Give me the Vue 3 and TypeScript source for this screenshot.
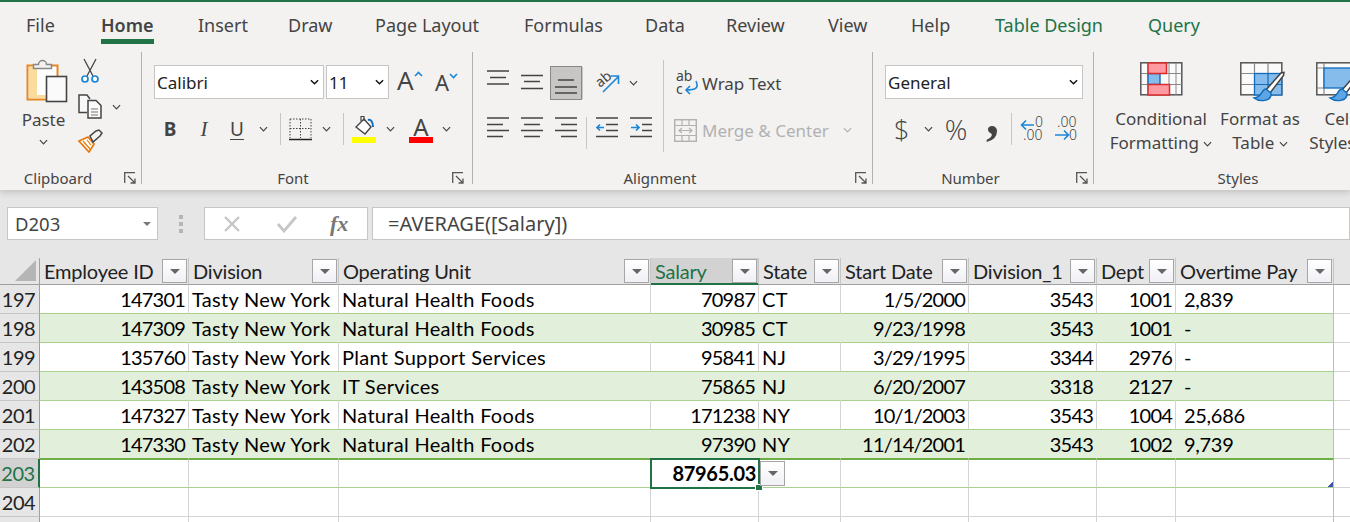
<script setup lang="ts">
interface Sheet {
  num: number
  id: string
  unit: string
  salary: string
  state: string
  start: string
  div1: string
  dept: string
  ot: string
}

const tabs: string[] = ['File', 'Home', 'Insert', 'Draw', 'Page Layout', 'Formulas', 'Data', 'Review', 'View', 'Help', 'Table Design', 'Query']

const headers: string[] = ['Employee ID', 'Division', 'Operating Unit', 'Salary', 'State', 'Start Date', 'Division_1', 'Dept', 'Overtime Pay']

const rows: Sheet[] = [
  { num: 197, id: '147301', unit: 'Natural Health Foods', salary: '70987', state: 'CT', start: '1/5/2000', div1: '3543', dept: '1001', ot: '2,839' },
  { num: 198, id: '147309', unit: 'Natural Health Foods', salary: '30985', state: 'CT', start: '9/23/1998', div1: '3543', dept: '1001', ot: '-' },
  { num: 199, id: '135760', unit: 'Plant Support Services', salary: '95841', state: 'NJ', start: '3/29/1995', div1: '3344', dept: '2976', ot: '-' },
  { num: 200, id: '143508', unit: 'IT Services', salary: '75865', state: 'NJ', start: '6/20/2007', div1: '3318', dept: '2127', ot: '-' },
  { num: 201, id: '147327', unit: 'Natural Health Foods', salary: '171238', state: 'NY', start: '10/1/2003', div1: '3543', dept: '1004', ot: '25,686' },
  { num: 202, id: '147330', unit: 'Natural Health Foods', salary: '97390', state: 'NY', start: '11/14/2001', div1: '3543', dept: '1002', ot: '9,739' },
]
</script>

<template>
  <div class="app">
    <nav class="tabs">
      <span v-for="t in tabs" :key="t" class="tab" :class="{ active: t === 'Home', ctx: t === 'Table Design' || t === 'Query' }">{{ t }}</span>
    </nav>

    <section class="ribbon">
      <!-- clipboard -->
      <div class="group g-clip">
        <div class="clip-body">
          <div class="paste">
            <svg width="42" height="46" viewBox="0 0 42 46">
              <rect x="1.5" y="7.5" width="30" height="34" fill="#fff" stroke="#e8871e" stroke-width="2" />
              <rect x="3" y="9" width="8" height="31" fill="#fbdc9c" />
              <rect x="3" y="37" width="18" height="3" fill="#fbdc9c" />
              <path d="M7.5 10.5V6.5h5a4 4 0 0 1 8 0h5v4z" fill="#f3f2f1" stroke="#8a8886" stroke-width="1.5" />
              <rect x="20.5" y="18.5" width="20" height="25" fill="#fafafa" stroke="#444" stroke-width="1.6" />
            </svg>
            <span class="paste-label">Paste</span>
            <svg class="chev" viewBox="0 0 10 6"><path d="M1 1l4 4 4-4" /></svg>
          </div>
          <div class="clip-tools">
            <svg width="24" height="26" viewBox="0 0 24 26">
              <path d="M6 1l9 17M18 1L9 18" fill="none" stroke="#444" stroke-width="1.3" />
              <circle cx="7" cy="21" r="3" fill="#fff" stroke="#1b87d6" stroke-width="1.7" />
              <circle cx="17" cy="21" r="3" fill="#fff" stroke="#1b87d6" stroke-width="1.7" />
            </svg>
            <div class="copy-row">
              <svg width="24" height="25" viewBox="0 0 24 25">
                <path d="M9 18.5H1V1h8l3 4" fill="#f8f8f8" stroke="#444" stroke-width="1.5" />
                <path d="M10 6.500h8l5 5V24H10z" fill="#fafafa" stroke="#444" stroke-width="1.5" />
                <path d="M13 15h7M13 18h7M13 21h7" stroke="#777" stroke-width="1" />
              </svg>
              <svg class="chev" viewBox="0 0 10 6"><path d="M1 1l4 4 4-4" /></svg>
            </div>
            <svg width="25" height="24" viewBox="0 0 25 24">
              <path d="M1 12l9-4 6 7-5 8z" fill="#fff" stroke="#e8780c" stroke-width="1.7" />
              <path d="M5 12l7 8M9 11l4 5" stroke="#e8780c" stroke-width="1.2" />
              <path d="M12 7l3 6 7-6 2-3-3-3-3 1z" fill="#f3f2f1" stroke="#444" stroke-width="1.5" />
            </svg>
          </div>
        </div>
        <footer class="glabel">
          <span class="gname">Clipboard</span>
          <svg class="launch" viewBox="0 0 12 12"><path d="M.7 11V.7H11M4 4l7 7M11 6.500V11H6.500" /></svg>
        </footer>
      </div>

      <!-- font -->
      <div class="group g-font">
        <div class="gbody">
          <div class="font-r1">
            <div class="select w-font"><span>Calibri</span><svg class="chev dark" viewBox="0 0 10 6"><path d="M1 1l4 4 4-4" /></svg></div>
            <div class="select w-size"><span>11</span><svg class="chev dark" viewBox="0 0 10 6"><path d="M1 1l4 4 4-4" /></svg></div>
            <div class="growa big">A<svg width="9" height="6" viewBox="0 0 9 6"><path d="M1 5l3.500-3.500L8 5" fill="none" stroke="#1b87d6" stroke-width="1.6" /></svg></div>
            <div class="growa small">A<svg width="9" height="6" viewBox="0 0 9 6"><path d="M1 1l3.500 3.500L8 1" fill="none" stroke="#1b87d6" stroke-width="1.6" /></svg></div>
          </div>
          <div class="font-r2">
            <span class="fmt b">B</span>
            <span class="fmt i">I</span>
            <span class="fmt u">U</span>
            <svg class="chev" viewBox="0 0 10 6"><path d="M1 1l4 4 4-4" /></svg>
            <i class="sep" />
            <svg width="23" height="23" viewBox="0 0 23 23">
              <path d="M1 1h21M1 1v19M22 1v19M11.500 1v19M1 10.500h21" fill="none" stroke="#444" stroke-width="1" stroke-dasharray="1.500 1.500" />
              <path d="M0 21.500h23" stroke="#222" stroke-width="1.500" />
            </svg>
            <svg class="chev" viewBox="0 0 10 6"><path d="M1 1l4 4 4-4" /></svg>
            <i class="sep" />
            <svg width="24" height="28" viewBox="0 0 24 28">
              <path d="M4 12l8-8 7 8-6 7z" fill="#fff" stroke="#444" stroke-width="1.400" />
              <path d="M9 6V1.500h3V6" fill="none" stroke="#444" stroke-width="1.200" />
              <path d="M16 5c3-1 5 2 5 7" fill="none" stroke="#106ebe" stroke-width="2" />
              <rect y="22" width="24" height="6" fill="#ffff00" />
            </svg>
            <svg class="chev" viewBox="0 0 10 6"><path d="M1 1l4 4 4-4" /></svg>
            <div class="fcolor"><span>A</span><i /></div>
            <svg class="chev" viewBox="0 0 10 6"><path d="M1 1l4 4 4-4" /></svg>
          </div>
        </div>
        <footer class="glabel">
          <span class="gname">Font</span>
          <svg class="launch" viewBox="0 0 12 12"><path d="M.7 11V.7H11M4 4l7 7M11 6.500V11H6.500" /></svg>
        </footer>
      </div>

      <!-- alignment -->
      <div class="group g-align">
        <div class="align-body">
          <div class="align-left">
            <div class="al-r1">
              <svg class="lines" viewBox="0 0 22 34"><path d="M0 5h22M3 11.500h16M0 18h22" /></svg>
              <svg class="lines" viewBox="0 0 22 34"><path d="M0 9.500h22M3 15.500h16M0 22.500h22" /></svg>
              <span class="al-on"><svg class="lines" viewBox="0 0 22 34"><path d="M3 14h16M0 21h22M0 27h22" /></svg></span>
              <i class="sep" />
              <svg class="orient" width="26" height="24" viewBox="0 0 26 24">
                <text x="0" y="13" transform="rotate(-40 8 8)" class="svg-txt">ab</text>
                <path d="M8 21L23 6M15.500 5h8v8" fill="none" stroke="#1b87d6" stroke-width="1.600" />
              </svg>
              <svg class="chev" viewBox="0 0 10 6"><path d="M1 1l4 4 4-4" /></svg>
            </div>
            <div class="al-r2">
              <svg class="lines" viewBox="0 0 22 22"><path d="M0 1h22M0 7.500h16M0 13.500h22M0 19.500h16" /></svg>
              <svg class="lines" viewBox="0 0 22 22"><path d="M0 1h22M3 7.500h16M0 13.500h22M3 19.500h16" /></svg>
              <svg class="lines" viewBox="0 0 22 22"><path d="M0 1h22M6 7.500h16M0 13.500h22M6 19.500h16" /></svg>
              <i class="sep" />
              <svg class="lines" viewBox="0 0 22 22"><path d="M0 1h22M10 7.500h12M10 13.500h12M0 19.500h22" /><path class="blue" d="M8 10.500H1M4 7.500l-3 3 3 3" /></svg>
              <svg class="lines" viewBox="0 0 22 22"><path d="M0 1h22M12 7.500h10M12 13.500h10M0 19.500h22" /><path class="blue" d="M1 10.500h8M6 7.500l3 3-3 3" /></svg>
            </div>
          </div>
          <div class="align-right">
            <div class="wrap-btn">
              <svg class="open" width="23" height="26" viewBox="0 0 23 26">
                <text x="0" y="11" class="svg-txt">ab</text>
                <text x="0" y="24" class="svg-txt">c</text>
                <path d="M20 11c3 7 0 9-10 9M14 16l-4 4 4 4" fill="none" stroke="#1b87d6" stroke-width="1.600" />
              </svg>
              <span>Wrap Text</span>
            </div>
            <div class="merge-btn">
              <svg width="23" height="23" viewBox="0 0 23 23">
                <rect x=".7" y=".7" width="21.600" height="21.600" fill="none" stroke="#b1b1b1" stroke-width="1.400" />
                <path d="M1 6.500h21M1 16.500h21M8 1v5M15 1v5M8 17v5M15 17v5M5 11.500h13M8 9l-3 2.500L8 14M15 9l3 2.500L15 14" fill="none" stroke="#b1b1b1" stroke-width="1.200" />
              </svg>
              <span>Merge &amp; Center</span>
              <svg class="chev dim" viewBox="0 0 10 6"><path d="M1 1l4 4 4-4" /></svg>
            </div>
          </div>
        </div>
        <footer class="glabel">
          <span class="gname">Alignment</span>
          <svg class="launch" viewBox="0 0 12 12"><path d="M.7 11V.7H11M4 4l7 7M11 6.500V11H6.500" /></svg>
        </footer>
      </div>

      <!-- number -->
      <div class="group g-num">
        <div class="gbody">
          <div class="select w-num"><span>General</span><svg class="chev dark" viewBox="0 0 10 6"><path d="M1 1l4 4 4-4" /></svg></div>
          <div class="num-r2">
            <span class="dollar">$</span>
            <svg class="chev" viewBox="0 0 10 6"><path d="M1 1l4 4 4-4" /></svg>
            <span class="pct">%</span>
            <span class="comma">,</span>
            <i class="sep" />
            <svg class="open" width="24" height="28" viewBox="0 0 24 28">
              <path d="M14 10H2M6 5.500L1.500 10 6 14.500" fill="none" stroke="#1b87d6" stroke-width="1.600" />
              <text x="15" y="12" class="svg-num">0</text>
              <text x="3" y="25" class="svg-num">.00</text>
            </svg>
            <svg class="open" width="24" height="28" viewBox="0 0 24 28">
              <text x="3" y="12" class="svg-num">.00</text>
              <path d="M1 20h13M10 15.500l4.500 4.500-4.500 4.500" fill="none" stroke="#1b87d6" stroke-width="1.600" />
              <text x="15" y="25" class="svg-num">0</text>
            </svg>
          </div>
        </div>
        <footer class="glabel">
          <span class="gname">Number</span>
          <svg class="launch" viewBox="0 0 12 12"><path d="M.7 11V.7H11M4 4l7 7M11 6.500V11H6.500" /></svg>
        </footer>
      </div>

      <!-- styles -->
      <div class="group g-styles">
        <div class="styles-body">
          <div class="style-btn w-cond">
            <svg class="cond-ico" width="43" height="34" viewBox="0 0 43 34">
              <rect x=".8" y=".8" width="41" height="32" fill="#fafafa" stroke="#555" stroke-width="1.500" />
              <path d="M1 11.500h41M1 22.500h41M8 1v32M29 1v32M36 1v32" stroke="#8a8886" stroke-width="1" />
              <rect x="8" y="11.500" width="12" height="11" fill="#85bcec" stroke="#0f6cbd" stroke-width="1.400" />
              <rect x="8" y="1" width="18.500" height="10.500" fill="#ff9aa2" stroke="#d92b2b" stroke-width="1.500" />
              <rect x="8" y="22.500" width="21.500" height="10.500" fill="#ff9aa2" stroke="#d92b2b" stroke-width="1.500" />
            </svg>
            <span>Conditional</span>
            <span>Formatting <svg class="chev" viewBox="0 0 10 6"><path d="M1 1l4 4 4-4" /></svg></span>
          </div>
          <div class="style-btn w-fmt">
            <svg class="fmt-ico" width="46" height="41" viewBox="0 0 46 41">
              <rect x=".8" y=".8" width="41" height="32" fill="#fafafa" stroke="#555" stroke-width="1.500" />
              <rect x="14.500" y="11.500" width="27.300" height="21.500" fill="#85bcec" stroke="#0f6cbd" stroke-width="1.300" />
              <path d="M1 11.500h13M1 22.500h13M14.500 1v10M28 1v10" stroke="#8a8886" stroke-width="1.200" />
              <path d="M14.500 22.500h27M28 11.500v21.500" stroke="#0f6cbd" stroke-width="1.200" />
              <path d="M26 28L41 11l3-.5-.5 3L30 31z" fill="#fff" stroke="#444" stroke-width="1.500" />
              <path d="M26 27c-5 0-3 8-12 9 5 4 18 4 17-5z" fill="#5da5e4" stroke="#0f6cbd" stroke-width="1.400" />
            </svg>
            <span>Format as</span>
            <span>Table <svg class="chev" viewBox="0 0 10 6"><path d="M1 1l4 4 4-4" /></svg></span>
          </div>
          <div class="style-btn w-cell">
            <svg width="46" height="41" viewBox="0 0 46 41">
              <rect x=".8" y=".8" width="41" height="32" fill="#fafafa" stroke="#555" stroke-width="1.500" />
              <path d="M8 1v32M1 6h7M1 26h7" stroke="#8a8886" stroke-width="1.200" />
              <rect x="8" y="6" width="33.800" height="20" fill="#85bcec" stroke="#0f6cbd" stroke-width="1.300" />
              <path d="M26 28L41 11l3-.5-.5 3L30 31z" fill="#fff" stroke="#444" stroke-width="1.500" />
              <path d="M26 27c-5 0-3 8-12 9 5 4 18 4 17-5z" fill="#5da5e4" stroke="#0f6cbd" stroke-width="1.400" />
            </svg>
            <span>Cell</span>
            <span>Styles <svg class="chev" viewBox="0 0 10 6"><path d="M1 1l4 4 4-4" /></svg></span>
          </div>
        </div>
        <footer class="glabel">
          <span class="gname">Styles</span>
        </footer>
      </div>
    </section>

    <div class="formula">
      <div class="namebox">
        <span>D203</span>
        <i class="tri" />
      </div>
      <div class="grip"><i /><i /><i /></div>
      <div class="fx-box">
        <svg width="18" height="18" viewBox="0 0 18 18"><path d="M2 2l14 14M16 2L2 16" stroke="#c8c6c4" stroke-width="2.400" /></svg>
        <svg width="22" height="18" viewBox="0 0 22 18"><path d="M2 9l6 7L20 2" fill="none" stroke="#c8c6c4" stroke-width="2.800" /></svg>
        <span class="fx">fx</span>
      </div>
      <div class="fx-input">=AVERAGE([Salary])</div>
    </div>

    <div class="sheet">
      <div class="row head">
        <div class="rh corner"><i /></div>
        <div v-for="h in headers" :key="h" class="hc" :class="{ sel: h === 'Salary' }">
          <span>{{ h }}</span>
          <b class="filter"><i class="tri" /></b>
        </div>
        <div class="hc blank" />
      </div>

      <div v-for="(r, i) in rows" :key="r.num" class="row" :class="{ band: i % 2 === 1, last: i === rows.length - 1 }">
        <div class="rh">{{ r.num }}</div>
        <div class="c right">{{ r.id }}</div>
        <div class="c txt">Tasty New York</div>
        <div class="c txt">{{ r.unit }}</div>
        <div class="c right">{{ r.salary }}</div>
        <div class="c txt">{{ r.state }}</div>
        <div class="c right">{{ r.start }}</div>
        <div class="c right">{{ r.div1 }}</div>
        <div class="c right">{{ r.dept }}</div>
        <div class="c acct">{{ r.ot }}</div>
        <div class="c out" />
      </div>

      <div class="row total">
        <div class="rh on">203</div>
        <div class="c" />
        <div class="c" />
        <div class="c" />
        <div class="c active right">87965.03<i class="handle" /><b class="filter drop"><i class="tri" /></b></div>
        <div class="c" />
        <div class="c" />
        <div class="c" />
        <div class="c" />
        <div class="c end"><i class="resize" /></div>
        <div class="c out" />
      </div>

      <div v-for="n in [204, 205]" :key="n" class="row plain">
        <div class="rh">{{ n }}</div>
        <div v-for="k in 10" :key="k" class="c" />
      </div>
    </div>
  </div>
</template>

<style>
html, body {
  margin: 0;
  background: #fff;
  overflow: hidden;
}
</style>

<style scoped>
.app {
  width: 1350px;
  height: 522px;
  overflow: hidden;
  background: #e6e6e6;
  font-family: "Noto Sans", "Open Sans", sans-serif;
  color: #444;
}

.tabs {
  box-sizing: border-box;
  height: 44px;
  border-top: 2px solid #217346;
  background: #f3f2f1;
  padding-left: 26px;
  display: grid;
  grid-template-columns: 75px 97px 90px 87px 149px 121px 81px 102px 83px 84px 153px 60px;
}
.tab {
  font-size: 18px;
  line-height: 46px;
  height: 42px;
  white-space: nowrap;
  justify-self: start;
}
.tab.active {
  font-weight: 600;
  box-shadow: inset 0 -5px 0 #217346;
}
.tab.ctx {
  color: #217346;
}

.ribbon {
  box-sizing: border-box;
  height: 146px;
  padding: 8px 0 6px;
  display: flex;
  background: #f3f2f1;
  box-shadow: 0 2px 7px rgba(0, 0, 0, .18);
  position: relative;
  overflow: hidden;
  clip-path: inset(0 0 -10px 0);
  font-size: 17px;
}
.group {
  box-sizing: border-box;
  flex: none;
  display: flex;
  flex-direction: column;
  border-right: 1px solid #b3b0ad;
  height: 132px;
}
.g-clip { width: 142px; }
.g-font { width: 331px; }
.g-align { width: 400px; }
.g-num { width: 221px; }
.g-styles { width: 256px; border-right: 0; }

.glabel {
  margin-top: auto;
  height: 16px;
  display: flex;
  align-items: center;
  font-size: 15px;
  line-height: 16px;
  margin-bottom: -2px;
}
.gname {
  flex: 1;
  text-align: center;
  padding-right: 8px;
}
.launch {
  width: 12px;
  height: 12px;
  margin-right: 5px;
  fill: none;
  stroke: #555;
  stroke-width: 1.300;
}
.g-font .launch { margin-right: 8px; }
.g-styles .gname {
  padding: 0 0 0 32px;
}

.chev {
  width: 9px;
  height: 6px;
  fill: none;
  stroke: #444;
  stroke-width: 1.300;
  flex: none;
}
.chev.dark { stroke: #111; stroke-width: 1.600; }
.chev.dim { stroke: #b1b1b1; }

.sep {
  display: block;
  width: 1px;
  height: 32px;
  background: #c8c6c4;
  flex: none;
}
.open { overflow: visible; }

/* clipboard */
.clip-body {
  display: flex;
  padding: 6px 0 0 22px;
}
.paste {
  width: 42px;
  display: flex;
  flex-direction: column;
  align-items: center;
  margin-left: 4px;
}
.paste-label {
  margin: 4px 7px 0 0;
  line-height: 24px;
}
.paste .chev { margin: 7px 7px 0 0; }
.clip-tools {
  display: flex;
  flex-direction: column;
  margin-left: 10px;
  gap: 10px;
}
.copy-row {
  display: flex;
  align-items: center;
  gap: 10px;
}

/* font */
.gbody {
  padding: 13px 0 0 12px;
}
.select {
  box-sizing: border-box;
  height: 34px;
  border: 1px solid #c8c6c4;
  background: #fff;
  display: flex;
  align-items: center;
  justify-content: space-between;
  padding: 0 4px 0 2px;
  color: #222;
  font-size: 17px;
}
.w-font { width: 170px; }
.w-size { width: 63px; }
.w-num { width: 198px; }
.font-r1 {
  display: flex;
  gap: 2px;
}
.growa {
  display: flex;
  line-height: 30px;
  color: #444;
}
.growa svg { margin-top: 6px; }
.growa.big { font-size: 26px; margin-left: 6px; width: 36px; }
.growa.small { font-size: 22px; padding-top: 2px; }
.font-r2 {
  margin-top: 14px;
  padding-left: 6px;
  display: flex;
  align-items: center;
  height: 32px;
}
.fmt {
  width: 20px;
  text-align: center;
  font-size: 19px;
  line-height: 24px;
}
.fmt.b { font-weight: 700; margin-right: 14px; }
.fmt.i { font-style: italic; font-family: "Liberation Serif", serif; font-size: 21px; margin-right: 13px; }
.fmt.u { text-decoration: underline; text-underline-offset: 3px; margin-right: 12px; }
.font-r2 > .chev { margin-right: 12px; }
.font-r2 > .sep { margin-right: 8px; }
.font-r2 > svg:not(.chev) { margin-right: 10px; }
.fcolor {
  width: 24px;
  margin: 0 9px 0 2px;
  display: flex;
  flex-direction: column;
  align-items: center;
  line-height: 21px;
  font-size: 24px;
}
.fcolor i {
  display: block;
  width: 24px;
  height: 6px;
  background: #ff0000;
}

/* alignment */
.align-body {
  display: flex;
}
.align-left {
  width: 190px;
  padding: 14px 0 0 14px;
  box-sizing: border-box;
}
.lines {
  width: 22px;
  height: 22px;
  fill: none;
  stroke: #444;
  stroke-width: 1.500;
  flex: none;
}
.lines .blue { stroke: #1b87d6; stroke-width: 1.700; }
.al-r1 {
  height: 34px;
  display: flex;
  align-items: center;
  gap: 12px;
}
.al-r1 .lines { height: 34px; }
.al-on {
  box-sizing: border-box;
  width: 32px;
  height: 34px;
  margin: 0 -9px 0 -5px;
  padding-left: 4px;
  background: #c8c6c4;
  border: 1px solid #8a8886;
  display: flex;
  align-items: flex-start;
}
.al-on .lines { margin-top: -1px; }
.orient { margin-left: 3px; overflow: visible; }
.al-r1 .chev { margin-left: -4px; }
.al-r2 {
  margin-top: 17px;
  height: 22px;
  display: flex;
  align-items: flex-start;
  gap: 12px;
}
.al-r2 .sep { margin: 0 -3px; }
.al-r1 .sep { margin: 0 -3px; }
.svg-txt {
  font-family: "Noto Sans", sans-serif;
  font-size: 14px;
  fill: #444;
  stroke: none;
}
.align-right {
  width: 209px;
  height: 92px;
  margin-top: 8px;
  border-left: 1px solid #c8c6c4;
  padding-left: 10px;
  box-sizing: border-box;
}
.wrap-btn, .merge-btn {
  display: flex;
  align-items: center;
  gap: 3px;
  font-size: 17px;
  white-space: nowrap;
}
.wrap-btn {
  height: 30px;
  margin: 8px 0 0 2px;
}
.merge-btn {
  height: 30px;
  margin-top: 17px;
  color: #b1b1b1;
}
.merge-btn svg:first-child { margin-right: 2px; }
.merge-btn .chev { margin-left: 11px; }

/* number */
.num-r2 {
  margin-top: 14px;
  display: flex;
  align-items: center;
  height: 32px;
  padding-left: 9px;
  color: #444;
  font-family: "Open Sans", "Noto Sans", sans-serif;
  font-weight: 300;
}
.dollar { font-size: 27px; width: 15px; margin-right: 15px; }
.pct { font-size: 28px; margin: 0 17px 0 10px; width: 26px; text-align: center; }
.comma {
  font-size: 52px;
  font-weight: 700;
  font-family: "Liberation Serif", serif;
  line-height: 24px;
  margin-top: -24px;
  width: 12px;
  margin-right: 13px;
}
.num-r2 .sep { margin-right: 8px; }
.num-r2 svg + svg { margin-left: 10px; }
.svg-num {
  font-family: "Noto Sans", sans-serif;
  font-size: 14px;
  fill: #444;
}

/* styles */
.styles-body {
  display: flex;
  padding: 10px 0 0 14px;
  width: 300px;
}
.style-btn {
  flex: none;
  display: flex;
  flex-direction: column;
  align-items: center;
  line-height: 24px;
  white-space: nowrap;
}
.style-btn > svg {
  height: 41px;
  margin-bottom: 4px;
  overflow: visible;
}
.style-btn > svg.cond-ico {
  height: 34px;
  margin-bottom: 11px;
}
.style-btn > svg.fmt-ico { margin-left: 6px; }
.style-btn .chev { vertical-align: 2px; }
.w-cond { width: 106px; }
.w-fmt { width: 92px; }
.w-cell { width: 66px; }

/* formula bar */
.formula {
  height: 33px;
  margin-top: 17px;
  padding-left: 7px;
  display: flex;
  color: #444;
}
.namebox, .fx-box, .fx-input {
  box-sizing: border-box;
  background: #fff;
  border: 1px solid #c8c6c4;
  display: flex;
  align-items: center;
}
.namebox {
  width: 151px;
  padding: 0 6px 0 7px;
  justify-content: space-between;
  font-size: 18.500px;
}
.tri {
  display: block;
  width: 0;
  height: 0;
  border-left: 4px solid transparent;
  border-right: 4px solid transparent;
  border-top: 4px solid #777;
}
.grip {
  width: 46px;
  display: flex;
  flex-direction: column;
  align-items: center;
  justify-content: center;
  gap: 3px;
}
.grip i {
  display: block;
  width: 4px;
  height: 4px;
  background: #b5b5b5;
}
.fx-box {
  width: 164px;
  gap: 35px;
  padding-left: 18px;
}
.fx {
  font-family: "Liberation Serif", serif;
  font-style: italic;
  font-weight: 700;
  font-size: 22px;
  color: #777;
  margin-left: -3px;
}
.fx-input {
  flex: 1;
  margin-left: 4px;
  padding-left: 15px;
  font-size: 20px;
}

/* sheet */
.sheet {
  margin-top: 18px;
  font-family: "Lato", "Noto Sans", sans-serif;
  font-size: 20px;
  color: #000;
}
.row {
  display: grid;
  grid-template-columns: 40px 149px 150px 312px 108px 82px 128px 128px 79px 158px 17px;
  height: 29px;
  background: #fff;
}
.head {
  height: 27px;
  background: #e6e6e6;
}
.rh {
  box-sizing: border-box;
  background: #e6e6e6;
  border-right: 1px solid #9f9f9f;
  border-bottom: 1px solid #c6c6c6;
  color: #222;
  text-align: center;
  padding-right: 2px;
  line-height: 28px;
  letter-spacing: -.5px;
}
.rh.on {
  background: #d2d2d2;
  color: #217346;
  border-right: 2px solid #217346;
}
.corner {
  display: flex;
  justify-content: flex-end;
  align-items: flex-end;
  padding: 0 3px 3px 0;
  border-bottom: 1px solid #9f9f9f;
}
.corner i {
  display: block;
  width: 0;
  height: 0;
  border-left: 21px solid transparent;
  border-bottom: 21px solid #b5b5b5;
}
.hc {
  box-sizing: border-box;
  min-width: 0;
  display: flex;
  align-items: center;
  justify-content: space-between;
  padding: 0 1px 0 4px;
  border-right: 1px solid #c6c6c6;
  border-bottom: 1px solid #9f9f9f;
  color: #222;
  white-space: nowrap;
  letter-spacing: -.2px;
}
.hc.sel {
  background: #d2d2d2;
  color: #217346;
  box-shadow: inset 0 -1px 0 #217346;
  border-bottom-color: #217346;
}
.hc.blank { border-right: 0; }
.filter {
  box-sizing: border-box;
  flex: none;
  width: 25px;
  height: 24px;
  border: 1px solid #a6a6a6;
  background: linear-gradient(#fff, #f0f0f5);
  display: flex;
  align-items: center;
  justify-content: center;
}
.filter .tri { border-top-color: #666; border-width: 5px 5px 0; }
.c {
  box-sizing: border-box;
  position: relative;
  min-width: 0;
  padding: 0 3px;
  border-right: 1px solid #d4d4d4;
  border-bottom: 1px solid #a9d08e;
  line-height: 28px;
  white-space: nowrap;
}
.c.right { text-align: right; letter-spacing: -.8px; padding-right: 3px; }
.c.txt { letter-spacing: .3px; }
.c.acct { padding-left: 8px; letter-spacing: -.3px; }
.c.out {
  border-right: 0;
  border-bottom: 1px solid #d4d4d4;
  background: #fff;
}
.row > .c:nth-child(10) { border-right-color: #a9d08e; }
.band .c:not(.out) {
  background: #e2efda;
  border-right-color: #e2efda;
}
.band .c:nth-child(10) { border-right-color: #a9d08e; }
.last .c:not(.out) { border-bottom: 1px solid #70ad47; }
.total .c { border-top: 1px solid #70ad47; line-height: 27px; }
.total .c.out { border-top: 0; }
.total .c.active {
  border: 0;
  outline: 2px solid #217346;
  outline-offset: -1px;
  z-index: 1;
  font-weight: 700;
  padding-right: 3px;
  letter-spacing: -.3px;
  line-height: 29px;
}
.handle {
  position: absolute;
  right: -4px;
  bottom: -3px;
  box-sizing: border-box;
  width: 8px;
  height: 7px;
  background: #217346;
  border: 1px solid #fff;
}
.drop {
  position: absolute;
  left: 109px;
  top: 2px;
  width: 25px;
  height: 25px;
}
.resize {
  position: absolute;
  right: 0;
  bottom: 0;
  width: 6px;
  height: 6px;
  background: linear-gradient(135deg, transparent 50%, #4054b2 50%);
}
.plain .c {
  border-bottom: 1px solid #d4d4d4;
}
.plain .c:last-child { border-right-color: #d4d4d4; }
.plain .rh { line-height: 28px; }
</style>
